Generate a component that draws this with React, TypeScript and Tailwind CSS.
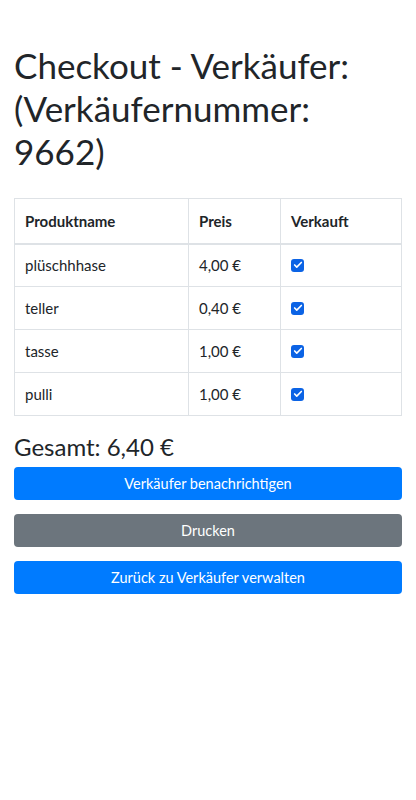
import { Check } from 'lucide-react';

const items = [
  { name: 'plüschhhase', price: '4,00 €' },
  { name: 'teller', price: '0,40 €' },
  { name: 'tasse', price: '1,00 €' },
  { name: 'pulli', price: '1,00 €' },
];

function Box() {
  return (
    <span className="flex h-[13px] w-[13px] items-center justify-center rounded-[3px] bg-[#0b63e5]">
      <Check className="h-[10px] w-[10px] text-white" strokeWidth={4} />
    </span>
  );
}

export default function App() {
  return (
    <div className="min-h-[800px] bg-white px-[14px] pt-[44px] text-[#212529] font-['Lato',sans-serif]">
      <h1 className="text-[35px] leading-[43px]">Checkout - Verkäufer: (Verkäufernummer: 9662)</h1>

      <table className="mt-[25px] w-full border-collapse border border-[#dee2e6] text-[15px]">
        <thead>
          <tr className="h-[45px] border-b-2 border-[#dee2e6]">
            <th className="w-[174px] border border-[#dee2e6] px-[10px] text-left font-bold">Produktname</th>
            <th className="w-[92px] border border-[#dee2e6] px-[10px] text-left font-bold">Preis</th>
            <th className="border border-[#dee2e6] px-[10px] text-left font-bold">Verkauft</th>
          </tr>
        </thead>
        <tbody>
          {items.map((item) => (
            <tr key={item.name} className="h-[43px]">
              <td className="border border-[#dee2e6] px-[10px]">{item.name}</td>
              <td className="border border-[#dee2e6] px-[10px]">{item.price}</td>
              <td className="border border-[#dee2e6] px-[10px]">
                <Box />
              </td>
            </tr>
          ))}
        </tbody>
      </table>

      <div className="mt-[16px] text-[24px] leading-[30px]">Gesamt: 6,40 €</div>

      <div className="mt-[5px] flex flex-col gap-[14px]">
        <button className="h-[33px] w-full rounded-[4px] bg-[#007bff] text-[14.5px] text-white">Verkäufer benachrichtigen</button>
        <button className="h-[33px] w-full rounded-[4px] bg-[#6c757d] text-[14.5px] text-white">Drucken</button>
        <button className="h-[33px] w-full rounded-[4px] bg-[#007bff] text-[14.5px] text-white">Zurück zu Verkäufer verwalten</button>
      </div>
    </div>
  );
}
